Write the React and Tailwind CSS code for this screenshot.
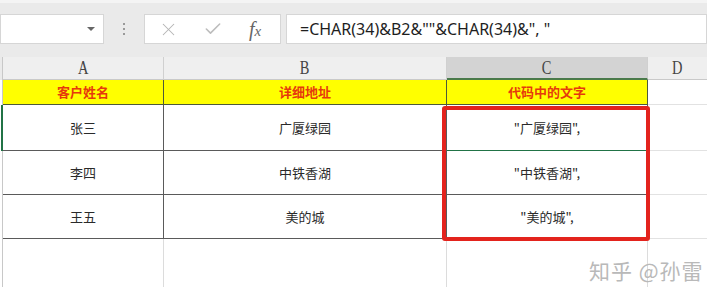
import { X, Check } from 'lucide-react'

const cols = [
  { key: 'A', w: 'w-[161px]' },
  { key: 'B', w: 'w-[283px]' },
  { key: 'C', w: 'w-[201px]' },
  { key: 'D', w: 'w-[59px]' },
]

const rows = [
  { name: '张三', addr: '广厦绿园', out: '"广厦绿园",', h: 'h-[46px]' },
  { name: '李四', addr: '中铁香湖', out: '"中铁香湖",', h: 'h-[44px]' },
  { name: '王五', addr: '美的城', out: '"美的城",', h: 'h-[44px]' },
]

const cjk = { fontFamily: '"Noto Sans CJK SC", "Noto Sans", sans-serif' }

function Toolbar() {
  return (
    <div className="h-[57px] bg-[#eaeaea] border-t-[3px] border-[#f4f4f4] flex items-start pt-[11px]">
      <div className="w-[104px] h-[30px] bg-white border border-[#d6d6d6] flex items-center justify-end pr-[8px]">
        <div className="w-0 h-0 border-l-[4px] border-r-[4px] border-t-[4px] border-l-transparent border-r-transparent border-t-[#666]" />
      </div>
      <div className="w-[40px] h-[30px] flex flex-col items-center justify-center gap-[3px]">
        <span className="w-[2px] h-[2px] bg-[#999]" />
        <span className="w-[2px] h-[2px] bg-[#999]" />
        <span className="w-[2px] h-[2px] bg-[#999]" />
      </div>
      <div className="w-[137px] h-[30px] bg-white border border-[#d6d6d6] flex items-center">
        <X size={21} strokeWidth={1.2} className="text-[#b4b4b4] ml-[13px]" />
        <Check size={20} strokeWidth={1.9} className="text-[#bdbdbd] ml-[24px]" />
        <span className="ml-[26px] text-[#666] italic text-[20px] leading-none" style={{ fontFamily: '"Liberation Serif", serif' }}>
          f<span className="text-[15px]">x</span>
        </span>
      </div>
      <div
        className="ml-[5px] w-[421px] h-[30px] bg-white border border-[#d6d6d6] flex items-center pl-[13px] text-[16px] text-[#1e1e1e]"
        style={{ fontFamily: '"Noto Sans", sans-serif' }}
      >
        =CHAR(34)&amp;B2&amp;""&amp;CHAR(34)&amp;", "
      </div>
    </div>
  )
}

export default function App() {
  return (
    <div className="w-[720px] h-[300px] bg-white overflow-hidden relative">
      <div className="w-[707px]">
        <Toolbar />

        {/* column headers */}
        <div className="flex h-[23px] bg-[#eaeaea]">
          <div className="w-[3px] border-r border-[#c8c8c8]" />
          {cols.map(c => (
            <div
              key={c.key}
              className={`${c.w} flex items-center justify-center text-[17px] text-[#444] border-b border-[#c9c9c9] ${c.key === 'C' ? 'bg-[#d3d3d3] border-b-2 border-b-[#4a7a4a]' : 'bg-[#efefef]'} ${c.key === 'D' ? '' : 'border-r border-r-[#d0d0d0]'}`}
              style={{ fontFamily: '"Liberation Serif", serif' }}
            >
              <span className="inline-block scale-x-[0.85] scale-y-[1.1]">{c.key}</span>
            </div>
          ))}
        </div>

        {/* header row */}
        <div className="flex h-[25px]" style={cjk}>
          <div className="w-[3px] border-r border-[#c8c8c8]" />
          {['客户姓名', '详细地址', '代码中的文字'].map((t, i) => (
            <div
              key={t}
              className={`${cols[i].w} bg-[#ffff00] flex items-center justify-center text-[13px] font-bold text-[#e63a0c] border-r border-b border-[#4d5a3a]`}
            >
              {t}
            </div>
          ))}
          <div className="w-[59px] border-b border-[#e2e2e2]" />
        </div>

        {/* data rows */}
        {rows.map((r, ri) => (
          <div key={r.name} className={`flex ${r.h}`} style={cjk}>
            <div className={`w-[3px] border-r ${ri === 0 ? 'border-[#217346] border-r-2' : 'border-[#c8c8c8]'}`} />
            <div className="w-[161px] flex items-center justify-center text-[13px] text-[#2a2a2a] border-r border-b border-[#5a5a5a]">
              {r.name}
            </div>
            <div className="w-[283px] flex items-center justify-center text-[13px] text-[#2a2a2a] border-r border-b border-[#5a5a5a]">
              {r.addr}
            </div>
            <div className={`w-[201px] flex items-center justify-center text-[13px] text-[#2a2a2a] border-r border-b border-[#5a5a5a] ${ri === 0 ? 'border-b-[#217346]' : ''}`}>
              {r.out}
            </div>
            <div className="w-[59px] border-b border-[#e2e2e2]" />
          </div>
        ))}

        {/* empty row */}
        <div className="flex h-[48px]">
          <div className="w-[3px] border-r border-[#c8c8c8]" />
          <div className="w-[161px] border-r border-[#dcdcdc]" />
          <div className="w-[283px] border-r border-[#dcdcdc]" />
          <div className="w-[201px] border-r border-[#dcdcdc]" />
          <div className="w-[59px]" />
        </div>
      </div>

      {/* red highlight box */}
      <div className="absolute left-[442px] top-[106px] w-[208px] h-[135px] border-[4px] border-[#e3231d] rounded-[3px]" />

      {/* watermark */}
      <div className="absolute left-[589px] top-[255px] text-[21px] text-[#b9b9b9] tracking-[1px]" style={cjk}>
        知乎 @孙雷
      </div>
    </div>
  )
}
